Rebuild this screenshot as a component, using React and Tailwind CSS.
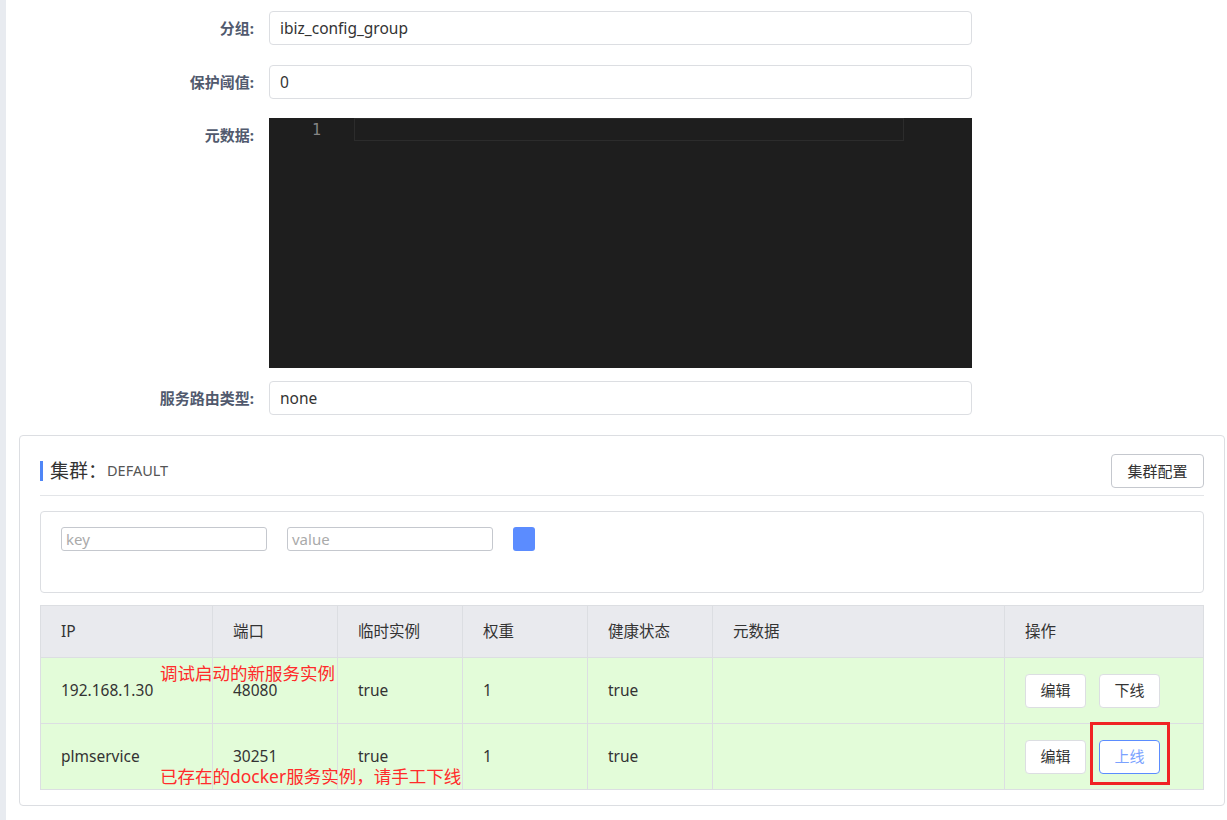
import React from "react";

const font = { fontFamily: '"Noto Sans", "Noto Sans CJK SC", sans-serif' };

const FormRow = ({ label, children }) => (
  <div className="flex items-start">
    <label className="w-[248px] shrink-0 text-right text-[15px] font-bold leading-[34px] text-[#515a6e]">
      {label}
    </label>
    <div className="ml-[15px] w-[703px]">{children}</div>
  </div>
);

const TextInput = ({ value }) => (
  <div className="h-[34px] rounded-[4px] border border-[#dcdee2] bg-white px-[10px] text-[15.5px] leading-[32px] text-[#333]">
    {value}
  </div>
);

const columns = [
  { title: "IP", w: "w-[172px]" },
  { title: "端口", w: "w-[125px]" },
  { title: "临时实例", w: "w-[125px]" },
  { title: "权重", w: "w-[125px]" },
  { title: "健康状态", w: "w-[125px]" },
  { title: "元数据", w: "w-[292px]" },
  { title: "操作", w: "flex-1" },
];

const rows = [
  { ip: "192.168.1.30", port: "48080", eph: "true", weight: "1", healthy: "true", online: true },
  { ip: "plmservice", port: "30251", eph: "true", weight: "1", healthy: "true", online: false },
];

const Btn = ({ children, blue }) => (
  <button
    className={
      "h-[34px] w-[61px] rounded-[4px] border bg-white text-[15px] " +
      (blue ? "border-[#5b8cff] text-[#7aa2ff]" : "border-[#dcdee2] text-[#333]")
    }
  >
    {children}
  </button>
);

export default function App() {
  return (
    <div className="flex min-h-[820px] bg-white" style={font}>
      {/* left strip */}
      <div className="w-[6px] shrink-0 bg-[#e8ebf0]" />

      <div className="flex-1 pt-[11px]">
        {/* Form */}
        <div className="flex flex-col">
          <FormRow label="分组:">
            <TextInput value="ibiz_config_group" />
          </FormRow>
          <div className="mt-[20px]">
            <FormRow label="保护阈值:">
              <TextInput value="0" />
            </FormRow>
          </div>
          <div className="mt-[19px]">
            <FormRow label="元数据:">
              <div className="flex h-[250px] bg-[#1e1e1e]">
                <div className="w-[64px] pr-[12px] pt-[1px] text-right text-[15px] leading-[22px] text-[#858585]" style={{ fontFamily: '"DejaVu Sans Mono", monospace' }}>
                  1
                </div>
                <div className="ml-[21px] h-[23px] w-[550px] border border-[#2c2c2c]" />
              </div>
            </FormRow>
          </div>
          <div className="mt-[13px]">
            <FormRow label="服务路由类型:">
              <TextInput value="none" />
            </FormRow>
          </div>
        </div>

        {/* Cluster card */}
        <div className="ml-[13px] mr-[2px] mt-[20px] rounded-[4px] border border-[#dcdee2] px-[20px] pb-[15px] pt-[18px]">
          <div className="flex items-center justify-between border-b border-[#e3e5e8] pb-[7px]">
            <div className="flex items-center">
              <span className="h-[20px] w-[3px] bg-[#4f86f7]" />
              <span className="ml-[7px] text-[19px] leading-[24px] text-[#333]">集群：</span>
              <span className="text-[14.5px] text-[#555]">DEFAULT</span>
            </div>
            <button className="h-[34px] w-[93px] rounded-[4px] border border-[#c5c8ce] bg-white text-[15px] text-[#333]">
              集群配置
            </button>
          </div>

          {/* filter */}
          <div className="mt-[15px] h-[82px] rounded-[4px] border border-[#dcdee2] px-[20px] pt-[15px]">
            <div className="flex items-center gap-[20px]">
              <div className="h-[24px] w-[206px] rounded-[3px] border border-[#c5c8ce] px-[4px] text-[15px] leading-[22px] text-[#aaa]">key</div>
              <div className="h-[24px] w-[206px] rounded-[3px] border border-[#c5c8ce] px-[4px] text-[15px] leading-[22px] text-[#aaa]">value</div>
              <div className="h-[24px] w-[22px] rounded-[3px] bg-[#5b8cff]" />
            </div>
          </div>

          {/* table */}
          <div className="relative mt-[12px] border border-[#dcdee2] text-[15.5px] text-[#333]">
            <div className="flex h-[51px] bg-[#e9eaee]">
              {columns.map((c, i) => (
                <div
                  key={c.title}
                  className={c.w + " flex items-center pl-[20px] " + (i < columns.length - 1 ? "border-r border-[#dcdee2]" : "")}
                >
                  {c.title}
                </div>
              ))}
            </div>
            {rows.map((r) => (
              <div key={r.ip} className="flex h-[66px] border-t border-[#dcdee2] bg-[#e3fcd9]">
                {[r.ip, r.port, r.eph, r.weight, r.healthy, ""].map((v, i) => (
                  <div key={i} className={columns[i].w + " flex items-center border-r border-[#dcdee2] pl-[20px]"}>
                    {v}
                  </div>
                ))}
                <div className="flex flex-1 items-center gap-[13px] pl-[20px]">
                  <Btn>编辑</Btn>
                  <Btn blue={!r.online}>{r.online ? "下线" : "上线"}</Btn>
                </div>
              </div>
            ))}

            {/* annotations */}
            <span className="absolute left-[119px] top-[57px] text-[17.5px] leading-[20px] text-[#ff2b2b]">调试启动的新服务实例</span>
            <span className="absolute left-[119px] top-[160px] text-[17.5px] leading-[20px] text-[#ff2b2b]">已存在的docker服务实例，请手工下线</span>
            <div className="absolute left-[1049px] top-[116px] h-[63px] w-[80px] border-[3px] border-[#f02424]" />
          </div>
        </div>
      </div>
    </div>
  );
}
